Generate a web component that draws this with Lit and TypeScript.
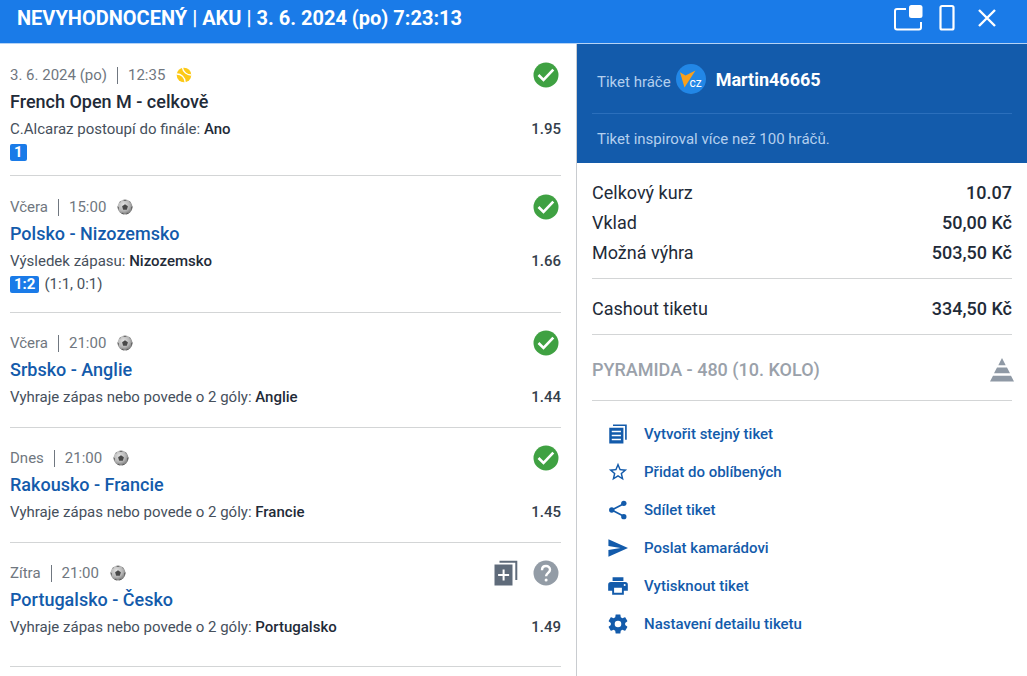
import { LitElement, html, css, svg, nothing } from "lit";
import { customElement, property } from "lit/decorators.js";

interface Bet {
  day: string;
  time: string;
  sport: "tennis" | "football";
  title: string;
  linked: boolean;
  market: string;
  pick: string;
  odds: string;
  won: boolean;
  score?: string;
  periods?: string;
}

const bets: Bet[] = [
  { day: "3. 6. 2024 (po)", time: "12:35", sport: "tennis", title: "French Open M - celkově", linked: false, market: "C.Alcaraz postoupí do finále:", pick: "Ano", odds: "1.95", won: true, score: "1" },
  { day: "Včera", time: "15:00", sport: "football", title: "Polsko - Nizozemsko", linked: true, market: "Výsledek zápasu:", pick: "Nizozemsko", odds: "1.66", won: true, score: "1:2", periods: "(1:1, 0:1)" },
  { day: "Včera", time: "21:00", sport: "football", title: "Srbsko - Anglie", linked: true, market: "Vyhraje zápas nebo povede o 2 góly:", pick: "Anglie", odds: "1.44", won: true },
  { day: "Dnes", time: "21:00", sport: "football", title: "Rakousko - Francie", linked: true, market: "Vyhraje zápas nebo povede o 2 góly:", pick: "Francie", odds: "1.45", won: true },
  { day: "Zítra", time: "21:00", sport: "football", title: "Portugalsko - Česko", linked: true, market: "Vyhraje zápas nebo povede o 2 góly:", pick: "Portugalsko", odds: "1.49", won: false },
];

const sportIcons = {
  tennis: html`<svg width="16" height="16" viewBox="0 0 16 16" aria-hidden="true">
    <circle cx="8" cy="8" r="7.3" fill="#fcc917" />
    <path d="M6.5 .6C7 5 11 8.200 15.500 8M.5 7C5 6.800 9.200 10.500 9.200 15.500" fill="none" stroke="#fff" stroke-width="1.300" />
  </svg>`,
  football: html`<svg width="16" height="16" viewBox="0 0 16 16" aria-hidden="true">
    <defs>
      <radialGradient id="ball" cx=".4" cy=".35" r=".7">
        <stop offset="0" stop-color="#e2e2e2" />
        <stop offset=".6" stop-color="#b4b4b4" />
        <stop offset="1" stop-color="#707070" />
      </radialGradient>
    </defs>
    <circle cx="8" cy="8" r="7.500" fill="url(#ball)" />
    <path d="M8 5.200l2.900 2.100-1.100 3.400H6.200L5.100 7.300z" fill="#484848" />
    <path d="M5.800 1l2.200 1 2.200-1A7.500 7.500 0 0 0 5.800 1zM.6 7l1.300 1.500L1.400 11A7.500 7.500 0 0 1 .6 7zM15.400 7l-1.300 1.500.5 2.500a7.500 7.500 0 0 0 .8-4zM4 14.200l2-.5 1 1.700a7 7 0 0 1-3-1.200zM12 14.200l-2-.5-1 1.700a7 7 0 0 0 3-1.200zM2 3.500l1.400-.2.4-1.300A8 8 0 0 0 2 3.500zM14 3.500l-1.400-.2-.4-1.300A8 8 0 0 1 14 3.500z" fill="#5c5c5c" />
  </svg>`,
};

const actions = [
  {
    label: "Vytvořit stejný tiket",
    icon: svg`<path d="M6 1.500h15.500V19" fill="none" stroke="currentColor" stroke-width="2" /><path d="M1.500 4.500h17v19h-17zM4.500 8.200v1.800h11V8.200zM4.500 12.900v1.800h11v-1.800zM4.500 17.600v1.800h11v-1.800z" fill-rule="evenodd" />`,
  },
  {
    label: "Přidat do oblíbených",
    icon: svg`<path transform="translate(-1.200 -1.200) scale(1.100)" d="M22 9.240l-7.190-.62L12 2 9.190 8.630 2 9.240l5.460 4.730L5.820 21 12 17.270 18.180 21l-1.630-7.030L22 9.240zM12 15.400l-3.760 2.270 1-4.280-3.320-2.880 4.380-.38L12 6.100l1.710 4.040 4.380.38-3.320 2.880 1 4.280L12 15.400z" />`,
  },
  {
    label: "Sdílet tiket",
    icon: svg`<path d="M19 4.500L4.500 12 19 19.500" fill="none" stroke="currentColor" stroke-width="2" /><circle cx="19" cy="4" r="3.200" /><circle cx="4.500" cy="12" r="3.200" /><circle cx="19" cy="20" r="3.200" />`,
  },
  {
    label: "Poslat kamarádovi",
    icon: svg`<path d="M.5 22.500L24 12 .5 1.500v8L15 12 .5 14.500z" />`,
  },
  {
    label: "Vytisknout tiket",
    icon: svg`<path d="M5.500 1.500h13V6h-13zM20.500 7.300h-17A3.300 3.300 0 0 0 .2 10.600v7.200H5v4.700h14v-4.700h4.800v-7.200a3.300 3.300 0 0 0-3.300-3.300zM16.700 20.200H7.300V14h9.400zM20 12a1.200 1.200 0 1 1 0-2.400 1.200 1.200 0 0 1 0 2.400z" fill-rule="evenodd" />`,
  },
  {
    label: "Nastavení detailu tiketu",
    icon: svg`<path transform="translate(-2.400 -2.400) scale(1.200)" d="M19.140 12.940c.04-.3.060-.61.060-.94 0-.32-.02-.64-.07-.94l2.030-1.580c.18-.14.230-.41.120-.61l-1.920-3.320c-.12-.22-.37-.29-.59-.22l-2.390.96c-.5-.38-1.030-.7-1.620-.94l-.36-2.540c-.04-.24-.24-.41-.48-.41h-3.840c-.24 0-.43.170-.47.410l-.36 2.540c-.59.240-1.130.570-1.620.940l-2.390-.96c-.22-.08-.47 0-.59.220L2.740 8.870c-.12.210-.08.470.120.610l2.030 1.580c-.05.300-.09.630-.09.940s.02.640.070.940l-2.030 1.580c-.18.140-.23.410-.12.610l1.920 3.320c.12.220.37.290.59.220l2.390-.96c.5.380 1.030.7 1.620.94l.36 2.540c.05.240.24.410.48.410h3.840c.24 0 .44-.17.470-.41l.36-2.540c.59-.24 1.130-.56 1.620-.94l2.390.96c.22.080.47 0 .59-.22l1.920-3.320c.12-.22.070-.47-.12-.61l-2.010-1.580zM12 15.300a3.300 3.300 0 1 1 0-6.600 3.300 3.300 0 0 1 0 6.600z" />`,
  },
];

@customElement("bet-row")
class BetRow extends LitElement {
  @property({ attribute: false }) bet!: Bet;

  static styles = css`
    :host {
      display: flex;
      justify-content: space-between;
      padding: 16px 0;
      border-bottom: 1px solid #d3d5d6;
      font-size: 15px;
      color: #46505c;
    }
    .meta {
      display: flex;
      align-items: center;
      height: 28px;
      color: #707780;
    }
    .time {
      display: flex;
      align-items: center;
      gap: 11px;
      margin-left: 10px;
      padding-left: 10px;
      border-left: 1px solid #707780;
      line-height: 17px;
    }
    .title {
      display: block;
      margin: 0;
      font-size: 18px;
      line-height: 26px;
      font-weight: 500;
      color: #1f2b38;
      text-decoration: none;
    }
    a.title {
      color: #135bab;
    }
    .market {
      margin: 0;
      line-height: 28px;
    }
    .pick {
      font-weight: 500;
      color: #1f2b38;
    }
    .result {
      display: flex;
      align-items: center;
      gap: 5px;
      height: 18px;
    }
    .score {
      padding: 0 4px;
      border-radius: 2px;
      background: #1a7be8;
      color: #fff;
      font-weight: 700;
      line-height: 17px;
    }
    .side {
      display: flex;
      flex-direction: column;
      align-items: flex-end;
      gap: 27px;
    }
    .status {
      display: flex;
      align-items: center;
      gap: 13px;
      height: 27px;
    }
    .status svg {
      display: block;
    }
    .add {
      padding: 0;
      border: 0;
      background: none;
    }
    .odds {
      line-height: 28px;
      font-weight: 500;
      color: #343e4b;
    }
  `;

  render() {
    const b = this.bet;
    return html`
      <div>
        <div class="meta">
          <span>${b.day}</span>
          <span class="time">${b.time} ${sportIcons[b.sport]}</span>
        </div>
        ${b.linked ? html`<a class="title" href="#">${b.title}</a>` : html`<h2 class="title">${b.title}</h2>`}
        <p class="market">${b.market} <span class="pick">${b.pick}</span></p>
        ${b.score
          ? html`<div class="result"><span class="score">${b.score}</span>${b.periods ? html`<span>${b.periods}</span>` : nothing}</div>`
          : nothing}
      </div>
      <div class="side">
        <div class="status">
          ${b.won
            ? html`<svg width="30" height="30" viewBox="0 0 30 30" role="img" aria-label="Výhra">
                <circle cx="15" cy="15" r="12.500" fill="#3fa142" />
                <path d="M7.500 15l5 5 9.800-10.400" fill="none" stroke="#fff" stroke-width="2.600" />
              </svg>`
            : html`<button class="add" aria-label="Přidat na tiket">
                  <svg width="24" height="26" viewBox="0 0 24 26">
                    <path d="M5.500 1.700h16.800V20" fill="none" stroke="#5f6b7a" stroke-width="2" />
                    <path d="M.5 4.500h18v21H.5z" fill="#5f6b7a" />
                    <path d="M9.600 9.500v11M4.100 15h11" stroke="#fff" stroke-width="2" />
                  </svg>
                </button>
                <svg width="30" height="26" viewBox="-2 0 30 26" role="img" aria-label="Nevyhodnoceno">
                  <circle cx="13" cy="13" r="12.500" fill="#939ca6" />
                  <path d="M9 10.200C9 7.600 10.700 6 13 6s4 1.600 4 3.800c0 3-3.900 3.300-3.900 6.500" fill="none" stroke="#fff" stroke-width="2.400" />
                  <circle cx="13.100" cy="20" r="1.500" fill="#fff" />
                </svg>`}
        </div>
        <span class="odds">${b.odds}</span>
      </div>
    `;
  }
}

@customElement("app-root")
class AppRoot extends LitElement {
  static styles = css`
    :host {
      display: flex;
      flex-direction: column;
      min-height: 100vh;
      background: #fff;
      font-family: Roboto, "Liberation Sans", sans-serif;
      color: #1f2b38;
    }
    .bar {
      display: flex;
      align-items: center;
      justify-content: space-between;
      height: 43px;
      padding: 0 24px 0 17px;
      background: #1a7be8;
      border-bottom: 1px solid #b5d3f5;
      color: #fff;
    }
    .heading {
      margin: 0;
      padding-bottom: 7px;
      font-size: 20px;
      line-height: 24px;
      font-weight: 700;
    }
    .tools {
      display: flex;
      align-items: center;
      gap: 16px;
      padding-bottom: 7px;
    }
    .tools button,
    .action {
      padding: 0;
      border: 0;
      background: none;
      color: inherit;
      font: inherit;
    }
    .tools svg {
      display: block;
    }
    .body {
      display: grid;
      grid-template-columns: 577fr 450fr;
      flex: 1;
    }
    .bets {
      padding: 0 15px 0 10px;
      border-right: 1px solid #c9ccd0;
    }
    .scored {
      padding: 17px 0 19px;
    }
    .first {
      padding-bottom: 14px;
    }
    .last {
      padding-bottom: 25px;
    }
    .player {
      padding: 15px 15px 10px;
      background: #135bab;
      color: #b3cfee;
      font-size: 15px;
    }
    .owner {
      display: flex;
      align-items: center;
      gap: 5px;
      height: 40px;
      padding: 0 5px 14px;
      border-bottom: 1px solid #2b6fbc;
    }
    .who {
      padding-top: 5px;
    }
    .name {
      margin-left: 5px;
      font-size: 18px;
      font-weight: 700;
      color: #fff;
    }
    .inspired {
      margin: 0;
      padding: 12px 5px 0;
      line-height: 27px;
    }
    .details {
      padding: 0 15px;
      font-size: 18px;
      line-height: 30px;
    }
    .group {
      margin: 0;
      padding: 15px 0 10px;
      border-bottom: 1px solid #d3d5d6;
    }
    .line {
      display: flex;
      justify-content: space-between;
    }
    .value {
      margin: 0;
      font-weight: 500;
    }
    .promo {
      display: flex;
      align-items: center;
      justify-content: space-between;
      height: 66px;
      padding-top: 5px;
      box-sizing: border-box;
      border-bottom: 1px solid #d3d5d6;
      font-weight: 500;
      color: #9aa1aa;
    }
    .promo svg {
      margin-right: -2px;
    }
    .actions {
      margin: 0;
      padding: 14px 16px;
      list-style: none;
      font-size: 15px;
      font-weight: 500;
      color: #135bab;
    }
    .action {
      display: flex;
      align-items: center;
      gap: 16px;
      height: 38px;
    }
  `;

  rowClass(b: Bet, i: number) {
    return [b.score ? "scored" : "", i === 0 ? "first" : "", i === bets.length - 1 ? "last" : ""].join(" ");
  }

  render() {
    return html`
      <header class="bar">
        <h1 class="heading">NEVYHODNOCENÝ | AKU | 3. 6. 2024 (po) 7:23:13</h1>
        <div class="tools">
          <button aria-label="Otevřít v novém okně">
            <svg width="30" height="28" viewBox="0 0 30 28">
              <path d="M13 5H4a2 2 0 0 0-2 2v16.500a2 2 0 0 0 2 2h22a2 2 0 0 0 2-2V18" fill="none" stroke="#fff" stroke-width="2" />
              <rect x="16" y="1" width="13.500" height="13" rx="2.500" fill="#fff" />
            </svg>
          </button>
          <button aria-label="Mobilní zobrazení">
            <svg width="16" height="28" viewBox="0 0 16 28">
              <rect x="1.500" y="2" width="13" height="23.500" rx="1.500" fill="none" stroke="#fff" stroke-width="2.200" />
            </svg>
          </button>
          <button aria-label="Zavřít">
            <svg width="32" height="28" viewBox="0 0 32 28">
              <path d="M8 6l16 16M24 6L8 22" stroke="#fff" stroke-width="2.400" />
            </svg>
          </button>
        </div>
      </header>
      <main class="body">
        <section class="bets">
          ${bets.map((b, i) => html`<bet-row class=${this.rowClass(b, i)} .bet=${b}></bet-row>`)}
        </section>
        <aside>
          <div class="player">
            <div class="owner">
              <span class="who">Tiket hráče</span>
              <svg width="30" height="30" viewBox="0 0 30 30" aria-hidden="true">
                <circle cx="15" cy="15" r="15" fill="#2287e6" />
                <path d="M4 8.300l5.500 3.200L19.500 6.500 8.500 23.500z" fill="#f8a01c" />
                <text x="13.500" y="22.500" font-size="12" fill="#fff">cz</text>
              </svg>
              <span class="name">Martin46665</span>
            </div>
            <p class="inspired">Tiket inspiroval více než 100 hráčů.</p>
          </div>
          <div class="details">
            <dl class="group">
              <div class="line"><dt>Celkový kurz</dt><dd class="value">10.07</dd></div>
              <div class="line"><dt>Vklad</dt><dd class="value">50,00 Kč</dd></div>
              <div class="line"><dt>Možná výhra</dt><dd class="value">503,50 Kč</dd></div>
            </dl>
            <dl class="group">
              <div class="line"><dt>Cashout tiketu</dt><dd class="value">334,50 Kč</dd></div>
            </dl>
            <div class="promo">
              <span>PYRAMIDA - 480 (10. KOLO)</span>
              <svg width="24" height="24" viewBox="0 0 24 24" aria-hidden="true">
                <path d="M12 0l3.700 7.200H8.300zM7 9.500h10l3 5.800H4zM3 17.800h18l3 5.800H0z" fill="#8f99a5" />
              </svg>
            </div>
            <ul class="actions">
              ${actions.map(
                (a) => html`<li>
                  <button class="action">
                    <svg width="20" height="20" viewBox="0 0 24 24" fill="currentColor" aria-hidden="true">${a.icon}</svg>
                    ${a.label}
                  </button>
                </li>`
              )}
            </ul>
          </div>
        </aside>
      </main>
    `;
  }
}
